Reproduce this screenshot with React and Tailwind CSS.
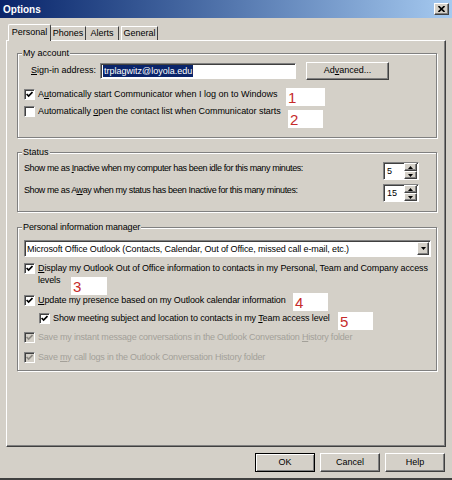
import React from 'react';

// classic 3d edges
const raised =
  'border border-t-white border-l-white border-r-[#404040] border-b-[#404040] shadow-[inset_-1px_-1px_0_#808080]';
const sunken =
  'border border-t-[#808080] border-l-[#808080] border-r-white border-b-white shadow-[inset_1px_1px_0_#404040]';
const etched = 'border border-[#808080] shadow-[inset_1px_1px_0_#fff,1px_1px_0_#fff]';

function Check({ checked, disabled, className = '' }) {
  return (
    <span
      className={`w-[11px] h-[11px] shrink-0 flex items-center justify-center ${sunken} ${
        disabled ? 'bg-[#d4d0c8]' : 'bg-white'
      } ${className}`}
    >
      {checked && (
        <svg width="7" height="7" viewBox="0 0 7 7">
          <path
            d="M0.6 3 L2.6 5 L6.5 1"
            fill="none"
            stroke={disabled ? '#8c8983' : '#000'}
            strokeWidth="1.7"
          />
        </svg>
      )}
    </span>
  );
}

function Row({ children, checked, disabled, className = '', boxClass = '' }) {
  return (
    <div className={`flex items-start ${className}`}>
      <Check checked={checked} disabled={disabled} className={`mt-[1px] ${boxClass}`} />
      <span
        className={`ml-[3px] leading-[12px] whitespace-nowrap ${disabled ? 'text-[#a3a099]' : ''}`}
      >
        {children}
      </span>
    </div>
  );
}

function Group({ label, className = '', children }) {
  return (
    <div className={`relative w-[420px] ${etched} ${className}`}>
      <span className="absolute -top-[6px] left-[4px] px-[1px] bg-[#d4d0c8] leading-[11px]">
        {label}
      </span>
      {children}
    </div>
  );
}

function Arrow({ up }) {
  return (
    <svg width="5" height="3" viewBox="0 0 5 3">
      <path d={up ? 'M2.5 0 L5 3 L0 3 Z' : 'M0 0 L5 0 L2.5 3 Z'} fill="#000" />
    </svg>
  );
}

function Spin({ value }) {
  return (
    <div className={`ml-auto mr-[17px] w-[36px] h-[18px] bg-white flex items-center ${sunken}`}>
      <span className="pl-[3px] flex-1 leading-[12px]">{value}</span>
      <div className="flex flex-col mr-[1px]">
        <span className={`w-[13px] h-[8px] bg-[#d4d0c8] flex items-center justify-center ${raised}`}>
          <Arrow up />
        </span>
        <span className={`w-[13px] h-[8px] bg-[#d4d0c8] flex items-center justify-center ${raised}`}>
          <Arrow />
        </span>
      </div>
    </div>
  );
}

const notes = [
  { n: '1', cls: 'left-[286px] top-[88px] w-[39px]' },
  { n: '2', cls: 'left-[288px] top-[110px] w-[35px]' },
  { n: '3', cls: 'left-[71px] top-[277px] w-[36px]' },
  { n: '4', cls: 'left-[293px] top-[293px] w-[35px]' },
  { n: '5', cls: 'left-[338px] top-[312px] w-[35px]' },
];

export default function App() {
  return (
    <div className="relative w-[452px] h-[480px] overflow-hidden bg-[#d4d0c8] border-b-2 border-b-[#404040] font-['Liberation_Sans',Arial,sans-serif] text-[9px] text-black">
      {/* title bar */}
      <div className="h-[18px] flex items-center justify-between pl-[3px] pr-[3px] bg-linear-to-r from-[#0a246a] to-[#a6caf0]">
        <span className="text-white font-bold text-[10px]">Options</span>
        <span className={`w-[15px] h-[12px] bg-[#d4d0c8] flex items-center justify-center ${raised}`}>
          <svg width="7" height="6" viewBox="0 0 7 6">
            <path d="M0.5 0 L6.5 6 M6.5 0 L0.5 6" stroke="#000" strokeWidth="1.6" />
          </svg>
        </span>
      </div>

      <div className="px-[6px]">
        {/* tabs */}
        <div className="relative z-10 flex items-end h-[16px] mt-[6px] pl-[2px]">
          <div className="w-[43px] h-[17px] -mb-[1px] bg-[#d4d0c8] border-t border-l border-t-white border-l-white border-r border-r-[#404040] rounded-t-[2px] flex items-center justify-center">
            Personal
          </div>
          <div className="w-[35px] h-[14px] border-t border-t-white border-r border-r-[#404040] flex items-center justify-center">
            Phones
          </div>
          <div className="w-[33px] h-[14px] border-t border-t-white border-r border-r-[#404040] flex items-center justify-center">
            Alerts
          </div>
          <div className="w-[37px] h-[14px] ml-[2px] border-t border-l border-t-white border-l-white border-r border-r-[#404040] flex items-center justify-center">
            General
          </div>
        </div>

        {/* tab page */}
        <div className="h-[407px] pl-[10px] pt-[12px] border border-t-white border-l-white border-r-[#404040] border-b-[#404040] shadow-[inset_-1px_-1px_0_#808080]">
          <Group label="My account" className="h-[85px]">
            <div className="flex items-center h-[18px] mt-[8px]">
              <span className="ml-[13px] w-[69px]">
                <u>S</u>ign-in address:
              </span>
              <div className={`w-[196px] h-[16px] bg-white flex items-center pl-[2px] ${sunken}`}>
                <span className="bg-[#0a246a] text-white leading-[12px] px-[1px]">
                  trplagwitz@loyola.edu
                </span>
              </div>
              <button className={`ml-[10px] w-[83px] h-[18px] bg-[#d4d0c8] ${raised}`}>
                Ad<u>v</u>anced...
              </button>
            </div>
            <div className="pl-[6px]">
              <Row checked className="mt-[8px]">
                A<u>u</u>tomatically start Communicator when I log on to Windows
              </Row>
              <Row className="mt-[5px] tracking-[-0.05px]">
                Automatically <u>o</u>pen the contact list when Communicator starts
              </Row>
            </div>
          </Group>

          <Group label="Status" className="h-[60px] mt-[14px] pl-[6px] pt-[9px]">
            <div className="flex items-start h-[18px]">
              <span className="leading-[11px] mt-[1px] tracking-[-0.4px]">
                Show me as <u>I</u>nactive when my computer has been idle for this many minutes:
              </span>
              <Spin value="5" />
            </div>
            <div className="flex items-start h-[18px] mt-[4px]">
              <span className="leading-[11px] mt-[1px] tracking-[-0.4px]">
                Show me as A<u>w</u>ay when my status has been Inactive for this many minutes:
              </span>
              <Spin value="15" />
            </div>
          </Group>

          <Group label="Personal information manager" className="h-[144px] mt-[15px] pl-[6px] pt-[12px] tracking-[-0.12px]">
            <div className={`w-[407px] h-[17px] bg-white flex items-center justify-between ${sunken}`}>
              <span className="pl-[2px] leading-[12px]">
                Microsoft Office Outlook (Contacts, Calendar, Out of Office, missed call e-mail, etc.)
              </span>
              <span className={`w-[12px] h-[13px] mr-[1px] bg-[#d4d0c8] flex items-center justify-center ${raised}`}>
                <Arrow />
              </span>
            </div>
            <Row checked className="mt-[5px]">
              <u>D</u>isplay my Outlook Out of Office information to contacts in my Personal, Team and Company access
              <br />
              levels
            </Row>
            <Row checked className="mt-[8px]">
              <u>U</u>pdate my presence based on my Outlook calendar information
            </Row>
            <Row checked className="mt-[6px]" boxClass="ml-[15px]">
              Show meeting subject and location to contacts in my <u>T</u>eam access level
            </Row>
            <Row checked disabled className="mt-[7px] tracking-[-0.2px]">
              Save my instant message conversations in the Outlook Conversation <u>H</u>istory folder
            </Row>
            <Row checked disabled className="mt-[8px] tracking-[-0.2px]">
              Save <u>m</u>y call logs in the Outlook Conversation History folder
            </Row>
          </Group>
        </div>

        {/* dialog buttons */}
        <div className="flex justify-end gap-[5px] mt-[6px] pr-[1px]">
          <button className="w-[60px] h-[19px] bg-[#d4d0c8] border border-black shadow-[inset_1px_1px_0_#fff,inset_-1px_-1px_0_#808080]">
            OK
          </button>
          <button className={`w-[60px] h-[19px] bg-[#d4d0c8] ${raised}`}>Cancel</button>
          <button className={`w-[60px] h-[19px] bg-[#d4d0c8] ${raised}`}>Help</button>
        </div>
      </div>

      {/* red number callouts pasted over the dialog */}
      {notes.map(({ n, cls }) => (
        <div
          key={n}
          className={`absolute h-[18px] bg-white pl-[2px] pt-[1px] text-[15px] leading-[18px] text-[#c62b2b] ${cls}`}
        >
          {n}
        </div>
      ))}
    </div>
  );
}
